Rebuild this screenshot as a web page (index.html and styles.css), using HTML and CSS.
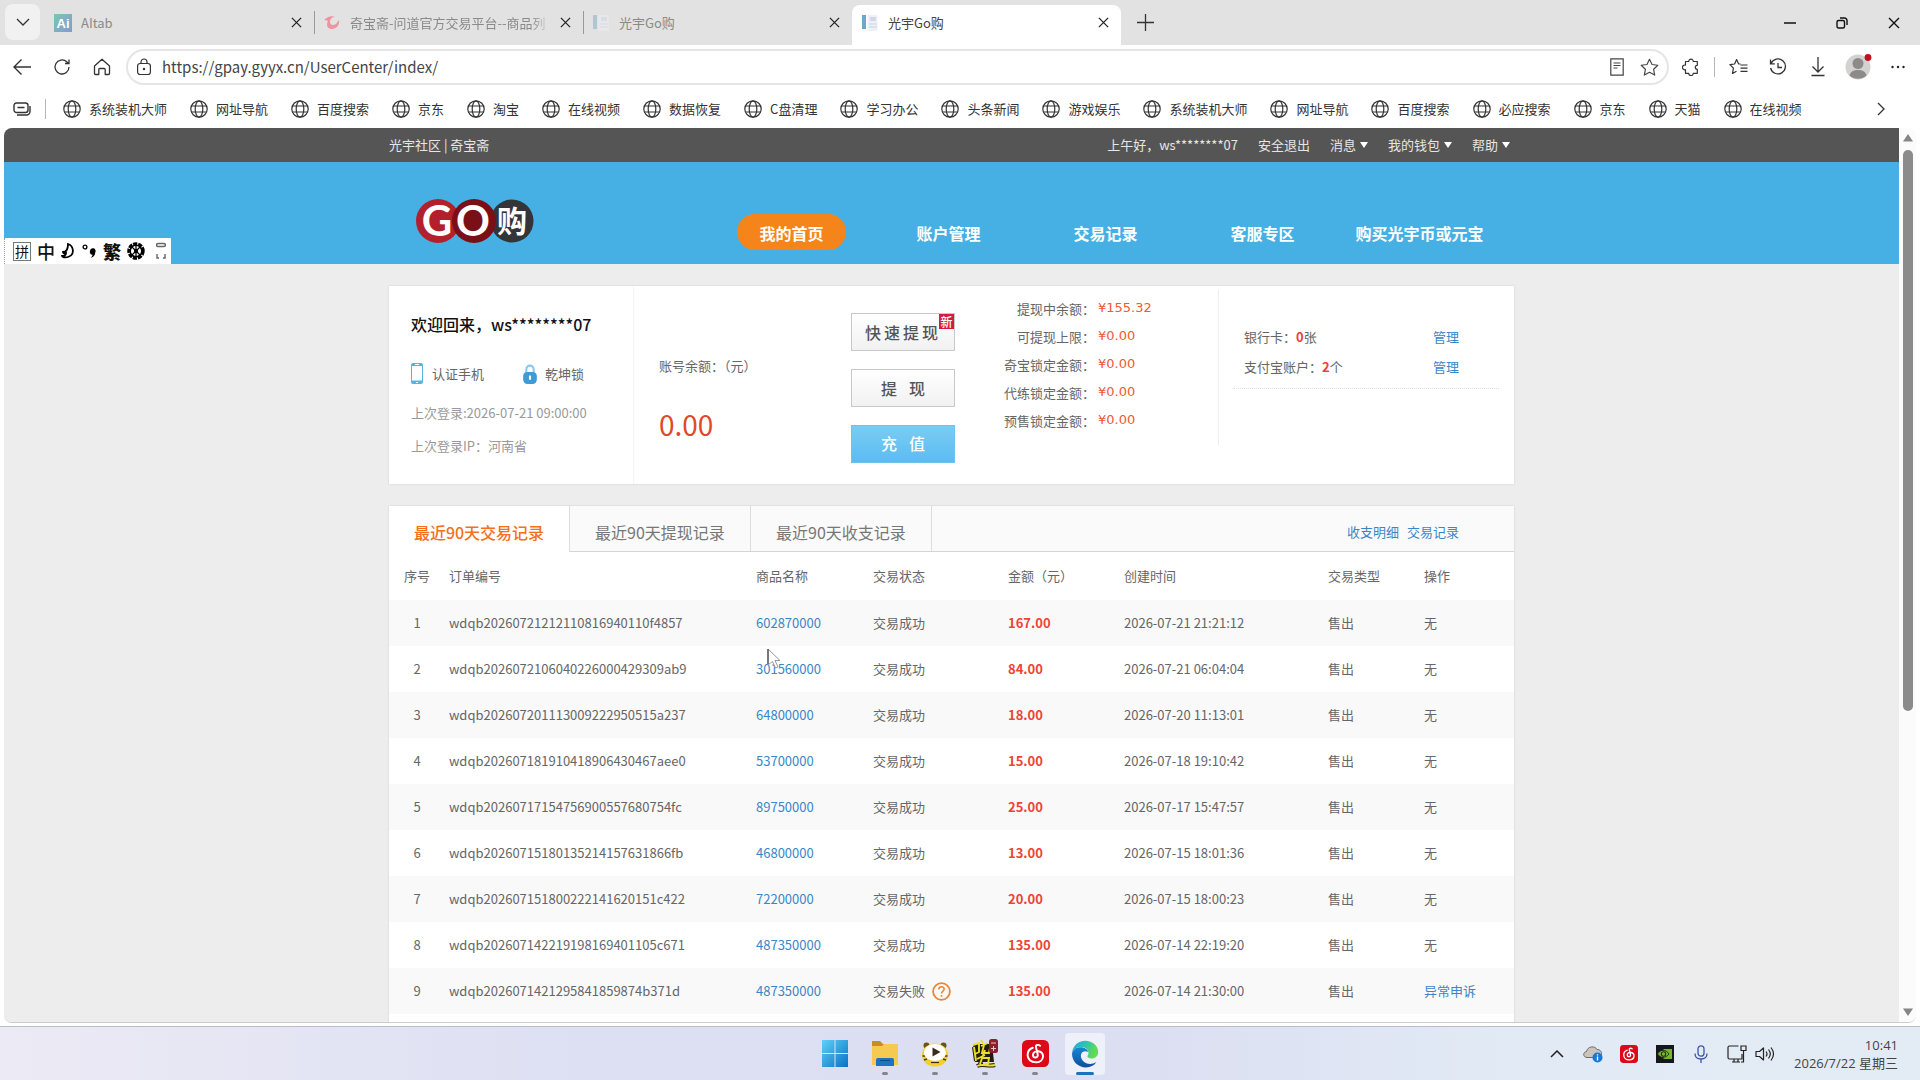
FILE: index.html
```html
<!DOCTYPE html>
<html lang="zh-CN">
<head>
<meta charset="utf-8">
<meta name="viewport" content="width=device-width, initial-scale=1">
<title>光宇Go购</title>
<link rel="stylesheet" href="styles.css">
</head>
<body>
<svg class="sprite" aria-hidden="true">
  <symbol id="i-globe" viewBox="0 0 18 18"><g fill="none" stroke="currentColor" stroke-width="1.2"><circle cx="9" cy="9" r="8.2"/><ellipse cx="9" cy="9" rx="3.8" ry="8.2"/><path d="M1.5 6h15M1.5 12h15"/></g></symbol>
  <symbol id="i-close" viewBox="0 0 12 12"><path d="M1 1l10 10M11 1L1 11" fill="none" stroke="currentColor" stroke-width="1.4"/></symbol>
  <symbol id="i-doc" viewBox="0 0 18 18"><path d="M1 1h4v14H1z" fill="#6ba9c6"/><path d="M6.500 1h10v16h-10z" fill="#eef1f6"/><path d="M9 3h6v4H9z" fill="#d3d7e3"/><path d="M8 10h8M8 13h8" stroke="#cdd2dc"/></symbol>
  <symbol id="i-netease" viewBox="0 0 26 26"><rect width="26" height="26" rx="5" fill="#dc0a18"/><path d="M17.500 5.500c-2-1.500-4.500-.8-4 1.700l1.600 6.500c.5 2-.7 3.200-2.200 3.200-1.700 0-2.600-1.400-2.300-3 .4-2.300 2.700-3.500 5.200-3.100 3 .5 4.600 2.700 4.400 5.300-.2 3-2.900 5.400-7 5.400-4.600 0-7.800-3-7.800-7 0-3.400 2-5.900 5-7" fill="none" stroke="#fff" stroke-width="1.900" stroke-linecap="round"/></symbol>
</svg>

<header class="browser">
  <div class="tabstrip">
    <button class="tab-menu" aria-label="标签页操作"><svg width="14" height="8" viewBox="0 0 14 8"><path d="M1 1l6 6 6-6" fill="none" stroke="#333" stroke-width="1.300"/></svg></button>
    <div class="tab">
      <svg class="tab-icon" viewBox="0 0 18 18"><defs><linearGradient id="g-ai" x2="1" y2="1"><stop stop-color="#7cc6b0"/><stop offset="1" stop-color="#8399d0"/></linearGradient></defs><rect width="18" height="18" fill="url(#g-ai)"/><text x="9" y="14" text-anchor="middle" class="ai-text">Ai</text></svg>
      <span class="tab-title">AItab</span><button class="tab-close" aria-label="关闭"><svg width="11" height="11"><use href="#i-close"/></svg></button>
    </div>
    <div class="tab tab-divided">
      <svg class="tab-icon" viewBox="0 0 18 18"><path d="M1 6c3-3 8-5 11-3-3 0-5 2-5 5s3 4 6 2l3-4c1 5-3 9-7 9-5 0-6-4-4-8-2-1-3-1-4-1z" fill="#ee93a0"/></svg>
      <span class="tab-title tab-title-long">奇宝斋-问道官方交易平台--商品列</span><button class="tab-close" aria-label="关闭"><svg width="11" height="11"><use href="#i-close"/></svg></button>
    </div>
    <div class="tab tab-divided">
      <svg class="tab-icon tab-icon-dim"><use href="#i-doc"/></svg>
      <span class="tab-title">光宇Go购</span><button class="tab-close" aria-label="关闭"><svg width="11" height="11"><use href="#i-close"/></svg></button>
    </div>
    <div class="tab tab-active">
      <svg class="tab-icon"><use href="#i-doc"/></svg>
      <span class="tab-title">光宇Go购</span><button class="tab-close" aria-label="关闭"><svg width="11" height="11"><use href="#i-close"/></svg></button>
    </div>
    <button class="tab-new" aria-label="新建标签页"><svg width="17" height="17" viewBox="0 0 17 17"><path d="M8.500 0v17M0 8.500h17" stroke="#333" stroke-width="1.300"/></svg></button>
    <div class="window-buttons">
      <button aria-label="最小化"><svg width="12" height="12"><path d="M0 6h12" stroke="#111" stroke-width="1.500"/></svg></button>
      <button aria-label="还原"><svg width="12" height="12" viewBox="0 0 12 12"><g fill="none" stroke="#111" stroke-width="1.400"><rect x="1" y="3.500" width="7.500" height="7.500" rx="1.500"/><path d="M4 1h4.500a2.500 2.500 0 0 1 2.500 2.500V8"/></g></svg></button>
      <button aria-label="关闭窗口"><svg width="12" height="12"><use href="#i-close"/></svg></button>
    </div>
  </div>

  <div class="toolbar">
    <button class="tool" aria-label="返回"><svg width="20" height="18" viewBox="0 0 20 18"><path d="M19 9H2M9.500 1.500L2 9l7.500 7.500" fill="none" stroke="#333" stroke-width="1.400"/></svg></button>
    <button class="tool" aria-label="刷新"><svg width="18" height="18" viewBox="0 0 18 18"><path d="M16 9a7 7 0 1 1-2.300-5.200L16 5.500M16 1.500v4h-4" fill="none" stroke="#333" stroke-width="1.300"/></svg></button>
    <button class="tool" aria-label="主页"><svg width="18" height="18" viewBox="0 0 18 18"><path d="M1.500 8L9 1.200 16.500 8v7.500q0 1-1 1h-3.300v-5a1 1 0 0 0-1-1H6.800a1 1 0 0 0-1 1v5H2.500q-1 0-1-1z" fill="none" stroke="#333" stroke-width="1.300" stroke-linejoin="round"/></svg></button>
    <label class="address">
      <svg width="16" height="18" viewBox="0 0 16 18"><g fill="none" stroke="#333" stroke-width="1.200"><rect x="1.600" y="5.500" width="12.800" height="11" rx="2.500"/><path d="M5 5.500V4a3 3 0 0 1 6 0v1.500"/></g><circle cx="8" cy="11" r="1.200" fill="#333"/></svg>
      <input type="text" value="https://gpay.gyyx.cn/UserCenter/index/" aria-label="地址">
      <svg width="14" height="18" viewBox="0 0 14 18"><g fill="none" stroke="#444" stroke-width="1.200"><path d="M.8.800h12.400v16.400H.8zM3.500 5h7M3.500 7.500h7M3.500 10h4"/></g></svg>
      <svg width="19" height="19" viewBox="0 0 18 18"><path d="M9 1.200l2.400 5 5.500.7-4 3.800 1 5.500L9 13.500l-4.900 2.700 1-5.500-4-3.800 5.500-.7z" fill="none" stroke="#444" stroke-width="1.100" stroke-linejoin="round"/></svg>
    </label>
    <button class="tool" aria-label="扩展"><svg width="18" height="18" viewBox="0 0 18 18"><path d="M3.500 3.500h3.200a2.300 2.300 0 1 1 4.600 0h4v3.800a2 2 0 1 0 0 4v4h-4a2.300 2.300 0 1 1-4.600 0H3.500v-3.600a2.400 2.400 0 1 1 0-4.600z" fill="none" stroke="#333" stroke-width="1.200" stroke-linejoin="round"/></svg></button>
    <span class="tool-divider"></span>
    <button class="tool" aria-label="收藏夹"><svg width="19" height="18" viewBox="0 0 19 18"><path d="M11.500 6L9.500 5.800 7.600 1.500 5.600 6 .9 6.700l3.500 3.500-.9 5.300 4-2.300M11.500 7h7M11.500 10.200h7M11.500 13.400h7" fill="none" stroke="#333" stroke-width="1.200" stroke-linejoin="round"/></svg></button>
    <button class="tool" aria-label="历史记录"><svg width="18" height="18" viewBox="0 0 18 18"><path d="M1.500 1.500v4.300h4.300M2 5.500A7.500 7.500 0 1 1 1.600 10M9 5v4.500h4" fill="none" stroke="#333" stroke-width="1.300"/></svg></button>
    <button class="tool" aria-label="下载"><svg width="14" height="20" viewBox="0 0 14 20"><path d="M7 0v15M1.500 9.500L7 15l5.500-5.500M.5 18.500h13" fill="none" stroke="#333" stroke-width="1.300"/></svg></button>
    <button class="tool" aria-label="个人资料"><svg width="28" height="28" viewBox="0 0 28 28"><circle cx="14" cy="14" r="12.500" fill="#d4d2d0"/><circle cx="14" cy="10.500" r="5.500" fill="#8d8b89"/><path d="M5.500 22.500c1-4 4-5.500 8.500-5.500s7.500 1.500 8.500 5.500a12.500 12.500 0 0 1-17 0z" fill="#8d8b89"/><circle cx="24" cy="4.500" r="3.400" fill="#c50f1f"/></svg></button>
    <button class="tool" aria-label="更多"><svg width="14" height="4" viewBox="0 0 14 4"><g fill="#222"><circle cx="1.500" cy="2" r="1.200"/><circle cx="7" cy="2" r="1.200"/><circle cx="12.500" cy="2" r="1.200"/></g></svg></button>
  </div>

  <nav class="bookmarks">
    <button class="tool" aria-label="收藏栏"><svg width="18" height="14" viewBox="0 0 18 14"><g fill="none" stroke="#333" stroke-width="1.400"><rect x="1" y="1" width="14" height="9.500" rx="2.500"/><path d="M4.500 5.500h7M4 13h9.500a3.500 3.500 0 0 0 3.500-3.500V4"/></g></svg></button>
    <span class="tool-divider"></span>
    <div class="bookmark-list">
      <a href="#"><svg><use href="#i-globe"/></svg>系统装机大师</a>
      <a href="#"><svg><use href="#i-globe"/></svg>网址导航</a>
      <a href="#"><svg><use href="#i-globe"/></svg>百度搜索</a>
      <a href="#"><svg><use href="#i-globe"/></svg>京东</a>
      <a href="#"><svg><use href="#i-globe"/></svg>淘宝</a>
      <a href="#"><svg><use href="#i-globe"/></svg>在线视频</a>
      <a href="#"><svg><use href="#i-globe"/></svg>数据恢复</a>
      <a href="#"><svg><use href="#i-globe"/></svg>C盘清理</a>
      <a href="#"><svg><use href="#i-globe"/></svg>学习办公</a>
      <a href="#"><svg><use href="#i-globe"/></svg>头条新闻</a>
      <a href="#"><svg><use href="#i-globe"/></svg>游戏娱乐</a>
      <a href="#"><svg><use href="#i-globe"/></svg>系统装机大师</a>
      <a href="#"><svg><use href="#i-globe"/></svg>网址导航</a>
      <a href="#"><svg><use href="#i-globe"/></svg>百度搜索</a>
      <a href="#"><svg><use href="#i-globe"/></svg>必应搜索</a>
      <a href="#"><svg><use href="#i-globe"/></svg>京东</a>
      <a href="#"><svg><use href="#i-globe"/></svg>天猫</a>
      <a href="#"><svg><use href="#i-globe"/></svg>在线视频</a>
    </div>
    <button class="tool bookmarks-more" aria-label="更多收藏"><svg width="8" height="14" viewBox="0 0 8 14"><path d="M1 1l6 6-6 6" fill="none" stroke="#333" stroke-width="1.300"/></svg></button>
  </nav>
</header>

<div class="viewport">
  <div class="page">
    <div class="topbar">
      <div class="container topbar-inner">
        <div><a href="#">光宇社区</a> | <a href="#">奇宝斋</a></div>
        <div class="topbar-user">
          <span>上午好，ws********07</span>
          <a href="#">安全退出</a>
          <a href="#" class="has-caret">消息</a>
          <a href="#" class="has-caret">我的钱包</a>
          <a href="#" class="has-caret">帮助</a>
        </div>
      </div>
    </div>

    <div class="masthead">
      <div class="container masthead-inner">
        <a href="#" class="logo" aria-label="GO购"><svg width="120" height="46" viewBox="0 0 120 46">
          <circle cx="23" cy="23" r="22" fill="#b3202c"/><circle cx="97" cy="23" r="21.500" fill="#333539"/><circle cx="59" cy="23" r="22" fill="#7b0f17"/>
          <g fill="#fff" text-anchor="middle"><text x="22" y="38" class="logo-latin">G</text><text x="58" y="38" class="logo-latin">O</text><text x="97" y="34" class="logo-han">购</text></g></svg></a>
        <nav class="mainnav">
          <a href="#" class="is-current">我的首页</a>
          <a href="#">账户管理</a>
          <a href="#">交易记录</a>
          <a href="#">客服专区</a>
          <a href="#">购买光宇币或元宝</a>
        </nav>
      </div>
    </div>

    <main class="container">
      <section class="card account">
        <div class="profile">
          <h1>欢迎回来，ws********07</h1>
          <div class="badges">
            <a href="#"><svg width="13" height="22" viewBox="0 0 13 22"><rect x="0" y="0" width="12" height="21" rx="2" fill="#56b4e2"/><rect x="1" y="3" width="10" height="14.500" fill="#fff"/><path d="M4 1.500h4M5 19.500h2" stroke="#fff"/></svg>认证手机</a>
            <a href="#"><svg width="14" height="21" viewBox="0 0 13 20"><path d="M3 9V5a3.500 3.500 0 0 1 7 0v4" fill="none" stroke="#8cc6ea" stroke-width="2"/><rect y="7.500" width="13" height="11.500" rx="4" fill="#3f9ad6"/><path d="M6.500 11v4" stroke="#fff" stroke-width="2"/></svg>乾坤锁</a>
          </div>
          <p>上次登录:2026-07-21 09:00:00</p>
          <p>上次登录IP：河南省</p>
        </div>
        <div class="balance">
          <span>账号余额：（元）</span>
          <strong>0.00</strong>
        </div>
        <div class="actions">
          <button class="btn btn-quick">快速提现<span class="btn-flag">新</span></button>
          <button class="btn btn-wide">提现</button>
          <button class="btn btn-wide btn-primary">充值</button>
        </div>
        <dl class="limits">
          <dt>提现中余额：</dt><dd>¥155.32</dd>
          <dt>可提现上限：</dt><dd>¥0.00</dd>
          <dt>奇宝锁定金额：</dt><dd>¥0.00</dd>
          <dt>代练锁定金额：</dt><dd>¥0.00</dd>
          <dt>预售锁定金额：</dt><dd>¥0.00</dd>
        </dl>
        <div class="bindings">
          <div><span>银行卡：<b>0</b>张</span><a href="#">管理</a></div>
          <div><span>支付宝账户：<b>2</b>个</span><a href="#">管理</a></div>
        </div>
      </section>

      <section class="card records">
        <div class="record-tabs">
          <button class="is-selected">最近90天交易记录</button>
          <button>最近90天提现记录</button>
          <button>最近90天收支记录</button>
          <div class="record-links"><a href="#">收支明细</a><a href="#">交易记录</a></div>
        </div>
        <table>
          <colgroup><col class="c-no"><col class="c-order"><col class="c-item"><col class="c-status"><col class="c-amount"><col class="c-time"><col class="c-type"><col></colgroup>
          <thead><tr><th>序号</th><th>订单编号</th><th>商品名称</th><th>交易状态</th><th>金额（元）</th><th>创建时间</th><th>交易类型</th><th>操作</th></tr></thead>
          <tbody>
            <tr><td>1</td><td>wdqb20260721212110816940110f4857</td><td><a href="#">602870000</a></td><td>交易成功</td><td class="money">167.00</td><td>2026-07-21 21:21:12</td><td>售出</td><td>无</td></tr>
            <tr><td>2</td><td>wdqb2026072106040226000429309ab9</td><td><a href="#">301560000</a></td><td>交易成功</td><td class="money">84.00</td><td>2026-07-21 06:04:04</td><td>售出</td><td>无</td></tr>
            <tr><td>3</td><td>wdqb202607201113009222950515a237</td><td><a href="#">64800000</a></td><td>交易成功</td><td class="money">18.00</td><td>2026-07-20 11:13:01</td><td>售出</td><td>无</td></tr>
            <tr><td>4</td><td>wdqb202607181910418906430467aee0</td><td><a href="#">53700000</a></td><td>交易成功</td><td class="money">15.00</td><td>2026-07-18 19:10:42</td><td>售出</td><td>无</td></tr>
            <tr><td>5</td><td>wdqb20260717154756900557680754fc</td><td><a href="#">89750000</a></td><td>交易成功</td><td class="money">25.00</td><td>2026-07-17 15:47:57</td><td>售出</td><td>无</td></tr>
            <tr><td>6</td><td>wdqb20260715180135214157631866fb</td><td><a href="#">46800000</a></td><td>交易成功</td><td class="money">13.00</td><td>2026-07-15 18:01:36</td><td>售出</td><td>无</td></tr>
            <tr><td>7</td><td>wdqb202607151800222141620151c422</td><td><a href="#">72200000</a></td><td>交易成功</td><td class="money">20.00</td><td>2026-07-15 18:00:23</td><td>售出</td><td>无</td></tr>
            <tr><td>8</td><td>wdqb202607142219198169401105c671</td><td><a href="#">487350000</a></td><td>交易成功</td><td class="money">135.00</td><td>2026-07-14 22:19:20</td><td>售出</td><td>无</td></tr>
            <tr><td>9</td><td>wdqb2026071421295841859874b371d</td><td><a href="#">487350000</a></td><td><span class="failed">交易失败<svg width="19" height="19" viewBox="0 0 19 19"><circle cx="9.500" cy="9.500" r="8.400" fill="none" stroke="#e8873c" stroke-width="1.800"/><path d="M6.800 7.500c0-3.600 5.400-3.600 5.400-.4 0 1.900-2.700 2-2.700 4.300M9.500 13v1.800" fill="none" stroke="#e8873c" stroke-width="1.600"/></svg></span></td><td class="money">135.00</td><td>2026-07-14 21:30:00</td><td>售出</td><td><a href="#">异常申诉</a></td></tr>
          </tbody>
        </table>
      </section>
    </main>
  </div>
  <div class="scrollbar">
    <svg width="10" height="8" viewBox="0 0 10 8"><path d="M5 0l5 7.500H0z" fill="#858585"/></svg>
    <div class="scroll-track"><div class="scroll-thumb"></div></div>
    <svg width="10" height="8" viewBox="0 0 10 8"><path d="M5 8L0 .5h10z" fill="#858585"/></svg>
  </div>
</div>

<footer class="taskbar">
  <div class="apps">
    <button aria-label="开始"><svg width="26" height="27" viewBox="0 0 26 27"><defs><linearGradient id="g-win" x2="1" y2="1"><stop stop-color="#5fd0f8"/><stop offset="1" stop-color="#0872c4"/></linearGradient></defs><path d="M0 0h12.500v13H0zM13.500 0H26v13H13.500zM0 14h12.500v13H0zM13.500 14H26v13H13.500z" fill="url(#g-win)"/></svg></button>
    <button class="running" aria-label="文件资源管理器"><svg width="28" height="27" viewBox="0 0 28 27"><path d="M1 1h8l3 3h15v8H1z" fill="#c98d1c"/><path d="M1 6h10l2-2h14v21H1z" fill="#f6ca51"/><path d="M5 26v-6q0-2 2-2h14q2 0 2 2v6z" fill="#1c73c0"/><path d="M9 20.500h10" stroke="#0c4a86"/></svg></button>
    <button class="running" aria-label="播放器"><svg width="28" height="28" viewBox="0 0 28 28"><circle cx="5.500" cy="5.500" r="3" fill="#6b5516"/><circle cx="22.500" cy="5.500" r="3" fill="#6b5516"/><ellipse cx="14" cy="15" rx="13" ry="11.500" fill="#f3cf2e"/><path d="M1.500 16h3M3 20l3-1M26.500 16h-3M25 20l-3-1" stroke="#4e3d10" stroke-width="1.400"/><ellipse cx="14" cy="12.500" rx="11" ry="8.500" fill="#fff"/><path d="M11.500 7.500l8 4.500-8 4.500z" fill="#3a2a1c"/><path d="M10 22.500h8" stroke="#3a2a1c" stroke-width="1.200"/></svg></button>
    <button class="running" aria-label="问道"><svg width="28" height="29" viewBox="0 0 28 29"><path d="M2 5h19l2 18H4z" fill="#221b10"/><g fill="none" stroke="#221b10" stroke-width="4"><path d="M3 8l2 14M13 6l-2 8h7M14 11l-5 14M6 27c6-3 11 1 18-1"/></g><g fill="none" stroke="#e8e02a" stroke-width="1.900"><path d="M3 8l2 14M2 6l6-2v9l-4 2M10 1l2 3M10 7l7-3M13 6l-2 8h7l1-5M6 20l8-4M14 11l-5 14M12 19h6l-1 6h-5M6 27c6-3 11 1 18-1"/></g><rect x="18" y="0" width="9" height="14" rx="2.500" fill="#8c1f2d"/><path d="M20 4h5M20 9.500h5M22.500 7v5" stroke="#f1c4c8"/></svg></button>
    <button class="running" aria-label="网易云音乐"><svg width="27" height="27"><use href="#i-netease"/></svg></button>
    <button class="focused" aria-label="Edge"><svg width="28" height="28" viewBox="0 0 28 28"><defs><linearGradient id="g-e1" x1="0" y1="0" x2="1" y2=".3"><stop stop-color="#2aa5dc"/><stop offset=".5" stop-color="#2cc3b4"/><stop offset="1" stop-color="#63dc4e"/></linearGradient><linearGradient id="g-e2" x2="0" y2="1"><stop stop-color="#1787d1"/><stop offset="1" stop-color="#0f4f9e"/></linearGradient></defs><path d="M1 13.500C1.500 6 7 .8 14.300.8 21.500.8 27.200 6 27.200 12c0 4-3 6.500-6.500 6.500-2.700 0-4.600-1-4.200-2.200.5-1.300 1-2 1-3.200 0-3.200-3-6-7.500-6S2 9.500 1 13.500z" fill="url(#g-e1)"/><path d="M1 13.500C2 9.300 5.500 7.300 9.500 7.300c4.200 0 7 2.200 7.800 4.700-5-2.500-8 1-7.300 5 .9 5 6.500 8 12 6.500 1.500-.4 2.500-1 3.300-1.300-2 3.400-6 5.200-10.300 5.200C7 27.400 1 21.500 1 13.500z" fill="url(#g-e2)"/></svg></button>
  </div>
  <div class="tray">
    <button aria-label="显示隐藏的图标"><svg width="14" height="8" viewBox="0 0 14 8"><path d="M1 7l6-6 6 6" fill="none" stroke="#222" stroke-width="1.500"/></svg></button>
    <button aria-label="OneDrive"><svg width="20" height="18" viewBox="0 0 20 18"><path d="M4 12.500C0 12.500-.5 7 3.500 6.500 4.500 1 12 .5 14 4.500c3 0 5 2 4.500 5L12 12.500z" fill="#c9c4bc" stroke="#6d6a66"/><circle cx="14.500" cy="12.500" r="5" fill="#1678d2"/><path d="M14.500 9.300v1.200M14.500 11.500v4" stroke="#fff" stroke-width="1.400"/></svg></button>
    <button aria-label="网易云音乐"><svg width="18" height="18"><use href="#i-netease"/></svg></button>
    <button aria-label="NVIDIA"><svg width="18" height="18" viewBox="0 0 18 18"><rect width="18" height="18" fill="#14181a"/><path d="M7.500 4H16v10H7.500z" fill="#74b62c"/><path d="M1.500 9c3-5 8-5 11.500 0-3.500 4.500-8.500 4.500-11.500 0z" fill="#74b62c" stroke="#14181a" stroke-width=".8"/><circle cx="7.500" cy="9" r="2.300" fill="none" stroke="#14181a"/></svg></button>
    <button aria-label="麦克风"><svg width="14" height="18" viewBox="0 0 14 18"><g fill="none" stroke="#3d55a4" stroke-width="1.300"><rect x="4" y=".8" width="6" height="10.400" rx="3"/><path d="M1 8.500c0 3.500 2.500 5.500 6 5.500s6-2 6-5.500M7 14v4"/></g></svg></button>
    <button aria-label="网络"><svg width="20" height="18" viewBox="0 0 20 18"><g fill="none" stroke="#222" stroke-width="1.200"><path d="M11.500 1H2.500q-1.500 0-1.500 1.500v10Q1 14 2.500 14h12.500V9M5 17h8M7 14v3M11 14v3"/><path d="M14 1h5v4.500h-5zM16.500 5.500V17H14"/></g></svg></button>
    <button class="tray-sound" aria-label="音量"><svg width="20" height="16" viewBox="0 0 20 16"><path d="M1 5.500h3.500L8.500 2v12l-4-3.500H1zM11 5.500q2 2.500 0 5M13.500 3.500q3.600 4.500 0 9M16 1.500q5 6.500 0 13" fill="none" stroke="#222" stroke-width="1.200" stroke-linejoin="round"/></svg></button>
    <div class="clock"><time>10:41</time><span>2026/7/22 星期三</span></div>
  </div>
</footer>

<div class="ime">
  <span class="ime-mode">拼</span><span>中</span>
  <svg width="14" height="16" viewBox="0 0 14 16"><path d="M7 1c6 2 7 11 0 13-3 1-6 0-6-1 3 0 4-1 4-3-2 1-3 0-3-1 3 0 5-3 5-8z" fill="none" stroke="#000" stroke-width="1.800"/></svg>
  <svg width="16" height="16" viewBox="0 0 14 16"><circle cx="3" cy="4" r="1.900" fill="none" stroke="#000" stroke-width="1.300"/><path d="M8 8a2.800 2.800 0 1 1 5.200 1.500c0 2.500-1.700 4.500-4.400 5.500 1-1.200 1.700-2.200 1.700-3.200A2.800 2.800 0 0 1 8 8z"/></svg>
  <b>繁</b>
  <svg width="18" height="18" viewBox="0 0 17 17"><circle cx="8.500" cy="8.500" r="7" fill="none" stroke="#000" stroke-width="2.500" stroke-dasharray="4 1"/><circle cx="8.500" cy="8.500" r="5.500" fill="#fff" stroke="#000" stroke-width="1.500"/><circle cx="8.500" cy="8.500" r="2"/><path d="M4 4l9 9M13 4l-9 9M8.500 3v11" stroke="#000" stroke-width="1.200"/></svg>
  <svg class="ime-grip" width="10" height="18" viewBox="0 0 10 18"><path d="M2.500 1.500h5q2 0 2 1.500t-2 1.500h-5Q.5 4.500.5 3t2-1.500M1 12v4h2M9 12v4H7" fill="none" stroke="#666" stroke-width="1.400"/></svg>
</div>
<svg class="cursor" viewBox="0 0 14 21" aria-hidden="true"><path d="M1 1l12 11.500H8l3 6.500-2.500 1-3-6.500L1 17z" fill="#fff" stroke="#999" stroke-width="1"/><path d="M1 1v15" stroke="#222"/></svg>
</body>
</html>
```
FILE: styles.css
```css
* { box-sizing: border-box; }

html, body { height: 100%; margin: 0; }

body {
  display: flex;
  flex-direction: column;
  position: relative;
  overflow: hidden;
  background: #fff;
  color: #666;
  font: 13px/20px "Noto Sans CJK SC", sans-serif;
}

a { color: inherit; text-decoration: none; }

button {
  display: flex;
  align-items: center;
  justify-content: center;
  margin: 0;
  padding: 0;
  border: 0;
  background: none;
  color: inherit;
  font: inherit;
}

svg { display: block; flex: none; }
h1, p, dl, dd { margin: 0; }

.sprite { position: absolute; width: 0; height: 0; }

/* Browser chrome */
.browser { flex: none; color: #333; }

.tabstrip {
  display: flex;
  height: 45px;
  padding-left: 5px;
  background: #e2e2e2;
}

.tab-menu {
  width: 35px;
  height: 36px;
  margin: 4px 5px 0 0;
  border-radius: 8px;
  background: #f1f1f1;
}

.tab {
  display: flex;
  align-items: center;
  gap: 9px;
  flex: 0 1 269px;
  min-width: 0;
  margin-top: 5px;
  padding: 0 12px 5px 9px;
  color: #8a8a8a;
}

.tab-divided {
  background: linear-gradient(#999, #999) 0 6px / 1px 23px no-repeat;
}

.tab-active {
  border-radius: 8px 8px 0 0;
  background: #fff;
  color: #444;
}

.tab-icon { width: 18px; height: 18px; }
.tab-icon-dim { opacity: .45; }
.ai-text { fill: #fff; font: bold 13px "Liberation Sans", sans-serif; }

.tab-title {
  flex: 1;
  min-width: 0;
  overflow: hidden;
  white-space: nowrap;
}

.tab-title-long {
  -webkit-mask-image: linear-gradient(90deg, #000 90%, transparent);
  mask-image: linear-gradient(90deg, #000 90%, transparent);
}

.tab-close { color: #222; }
.tab-new { width: 48px; }

.window-buttons {
  display: flex;
  margin-left: auto;
  color: #111;
}

.window-buttons button { width: 52px; }

.toolbar {
  display: flex;
  align-items: center;
  height: 44px;
  padding: 0 2px;
}

.tool { flex: none; width: 40px; height: 32px; }

.tool-divider {
  width: 1px;
  height: 20px;
  margin: 0 3px;
  background: #b5b5b5;
}

.address {
  display: flex;
  align-items: center;
  flex: 1;
  gap: 10px;
  height: 36px;
  margin: 0 2px 0 4px;
  padding: 0 8px;
  border: 2px solid #e5e5e5;
  border-radius: 18px;
}

.address input {
  flex: 1;
  min-width: 0;
  padding: 0;
  border: 0;
  outline: 0;
  background: none;
  color: #444;
  font: 15px/24px "Noto Sans CJK SC", sans-serif;
}

.address svg:last-child { margin-left: 6px; }

.bookmarks {
  display: flex;
  align-items: center;
  height: 39px;
  padding: 0 15px 0 2px;
}

.bookmark-list {
  display: flex;
  flex: 1;
  gap: 23px;
  min-width: 0;
  padding-left: 14px;
  overflow: hidden;
}

.bookmark-list a {
  display: flex;
  align-items: center;
  flex: none;
  gap: 8px;
  white-space: nowrap;
}

.bookmark-list svg { width: 18px; height: 18px; }
.bookmarks-more { width: 48px; }

/* Page viewport */
.viewport {
  display: flex;
  flex: 1;
  min-height: 0;
  margin: 0 4px 3px;
  overflow: hidden;
  border-bottom: 1px solid #ccc;
  border-radius: 8px;
}

.page {
  flex: 1;
  min-width: 0;
  overflow: hidden;
  background: #ededed;
}

.container {
  width: 100%;
  max-width: 1125px;
  margin: 0 auto;
}

.topbar { background: #555; color: #e6e6e6; }

.topbar-inner {
  display: flex;
  align-items: center;
  justify-content: space-between;
  height: 34px;
}

.topbar-user {
  display: flex;
  gap: 20px;
  padding-right: 4px;
}

.has-caret {
  display: flex;
  align-items: center;
  gap: 4px;
}

.has-caret::after {
  content: "";
  border: 4px solid transparent;
  border-top: 6px solid #fff;
  border-bottom: 0;
}

.masthead { background: #46b0e4; }

.masthead-inner {
  display: flex;
  align-items: flex-start;
  justify-content: space-between;
  height: 102px;
  padding: 36px 16px 0 26px;
}

.logo-latin { font: bold 42px Lato, sans-serif; }
.logo-han { font: bold 30px "Noto Sans CJK SC", sans-serif; }

.mainnav {
  display: grid;
  grid-template-columns: repeat(5, 157px);
  justify-items: center;
  margin-top: 16px;
  color: #fff;
  font-size: 16px;
  font-weight: 700;
  line-height: 34px;
}

.mainnav a { padding-top: 2px; white-space: nowrap; }

.mainnav .is-current {
  padding: 2px 22px 0;
  border-radius: 18px;
  background: #f5841a;
}

.card {
  background: #fff;
  box-shadow: 0 0 2px #ccc;
}

/* Account summary */
.account {
  display: grid;
  grid-template-columns: 245px 217px 104px 1fr 295px;
  height: 198px;
  margin-top: 22px;
}

.profile {
  padding: 26px 0 0 22px;
  border-right: 1px solid #f4f4f4;
  color: #999;
}

.profile h1 {
  color: #111;
  font-size: 16px;
  font-weight: 500;
  line-height: 24px;
}

.badges {
  display: flex;
  gap: 39px;
  margin: 24px 0 15px;
  color: #666;
}

.badges a {
  display: flex;
  align-items: center;
  gap: 8px;
  height: 28px;
}

.profile p { margin-bottom: 13px; }

.balance {
  display: flex;
  flex-direction: column;
  gap: 24px;
  padding: 70px 0 0 25px;
}

.balance strong {
  color: #e0492c;
  font-size: 28px;
  font-weight: 400;
  line-height: 48px;
}

.actions {
  display: flex;
  flex-direction: column;
  gap: 18px;
  padding-top: 27px;
}

.btn {
  position: relative;
  height: 38px;
  border: 1px solid #c9c9c9;
  background: linear-gradient(#fff, #f1f1f1);
  color: #555;
  font-size: 16px;
  font-weight: 500;
}

.btn-quick { letter-spacing: 3px; }
.btn-wide { letter-spacing: 12px; text-indent: 12px; }

.btn-primary {
  padding-bottom: 2px;
  border-color: #6cc3ec;
  background: linear-gradient(#7accf1, #5bbcf3);
  color: #fff;
}

.btn-flag {
  position: absolute;
  top: 0;
  right: 0;
  width: 15px;
  background: #d21d3c;
  color: #fff;
  font-size: 12px;
  line-height: 15px;
  letter-spacing: 0;
}

.limits {
  display: grid;
  grid-template-columns: 140px 1fr;
  grid-auto-rows: 28px;
  column-gap: 3px;
  height: 155px;
  margin-top: 4px;
  padding-top: 9px;
  border-right: 1px solid #eee;
}

.limits dt { text-align: right; }

.limits dd {
  color: #ee5a34;
  font-family: "DejaVu Sans", sans-serif;
  line-height: 18px;
}

.bindings {
  height: 103px;
  margin: 0 15px 0 14px;
  padding-top: 41px;
  border-bottom: 1px dotted #ddd;
}

.bindings div {
  display: flex;
  justify-content: space-between;
  margin-bottom: 10px;
  padding: 0 40px 0 11px;
}

.bindings b { color: #e9413a; }
.records a { color: #3a86c8; }
.bindings a { color: #3a86c8; }

/* Transaction records */
.records { margin-top: 22px; padding-bottom: 46px; }

.record-tabs {
  display: flex;
  height: 46px;
  border-bottom: 1px solid #d5d5d5;
  background: #fafafa;
}

.record-tabs button {
  width: 181px;
  padding-top: 6px;
  border-right: 1px solid #ddd;
  color: #777;
  font-size: 16px;
}

.record-tabs .is-selected {
  margin-bottom: -1px;
  background: #fff;
  color: #f4701c;
  font-weight: 500;
}

.record-links {
  display: flex;
  align-items: center;
  gap: 8px;
  margin-left: auto;
  padding: 6px 55px 0 0;
}

table {
  width: 100%;
  border-collapse: collapse;
  table-layout: fixed;
}

.c-no { width: 56px; }
.c-order { width: 307px; }
.c-item { width: 117px; }
.c-status { width: 135px; }
.c-amount { width: 116px; }
.c-time { width: 204px; }
.c-type { width: 96px; }

th, td {
  height: 46px;
  padding: 0 0 0 4px;
  font-weight: 400;
  text-align: left;
  white-space: nowrap;
}

th { height: 48px; }

th:first-child, td:first-child { padding: 0; text-align: center; }
tbody tr:nth-child(odd) { background: #f9f9f9; }
.records .money { color: #ec4437; font-weight: 700; }

.failed {
  display: flex;
  align-items: center;
  gap: 7px;
}

/* Scrollbar */
.scrollbar {
  display: flex;
  flex-direction: column;
  align-items: center;
  gap: 8px;
  width: 17px;
  padding: 6px 0;
  background: #fbfbfb;
}

.scroll-track { flex: 1; }

.scroll-thumb {
  width: 10px;
  height: 66%;
  border-radius: 5px;
  background: #8b8b8b;
}

/* Taskbar */
.taskbar {
  display: grid;
  grid-template-columns: 1fr auto 1fr;
  align-items: center;
  flex: none;
  height: 54px;
  border-top: 1px solid #b9bec8;
  background: linear-gradient(90deg, #eceaf4, #dde0f3 30%, #dcdff2 60%, #e2ebf5 80%, #e3ecf5);
}

.apps {
  display: flex;
  grid-column: 2;
  gap: 10px;
}

.apps button {
  position: relative;
  width: 40px;
  height: 42px;
}

.apps .focused { border-radius: 4px; background: #eef1fa; }

.running::after, .focused::after {
  content: "";
  position: absolute;
  bottom: 0;
  width: 6px;
  height: 3px;
  border-radius: 2px;
  background: #83858f;
}

.focused::after { width: 18px; background: #1b72bd; }

.tray {
  display: flex;
  align-items: center;
  justify-content: flex-end;
  padding-right: 22px;
}

.tray button { width: 36px; height: 36px; }
.tray .tray-sound { width: 20px; margin-right: 8px; }

.clock {
  flex: none;
  width: 115px;
  color: #444;
  font: 13px/18px "Open Sans", "Noto Sans CJK SC", sans-serif;
  text-align: right;
  white-space: nowrap;
}

.clock time { display: block; }

/* Floating input-method bar */
.ime {
  position: absolute;
  top: 238px;
  left: 4px;
  display: flex;
  align-items: center;
  gap: 6px;
  width: 167px;
  height: 26px;
  padding-left: 8px;
  border-left: 1px dotted #999;
  background: #fff;
  color: #111;
  font-size: 18px;
  font-weight: 500;
}

.ime-mode {
  width: 18px;
  border: 1px solid #777;
  font-size: 14px;
  font-weight: 400;
  line-height: 17px;
  text-align: center;
}

.ime b { font-weight: 900; }
.ime-grip { margin-left: 5px; }

.cursor {
  position: absolute;
  top: 648px;
  left: 767px;
  width: 14px;
  height: 21px;
}
```
